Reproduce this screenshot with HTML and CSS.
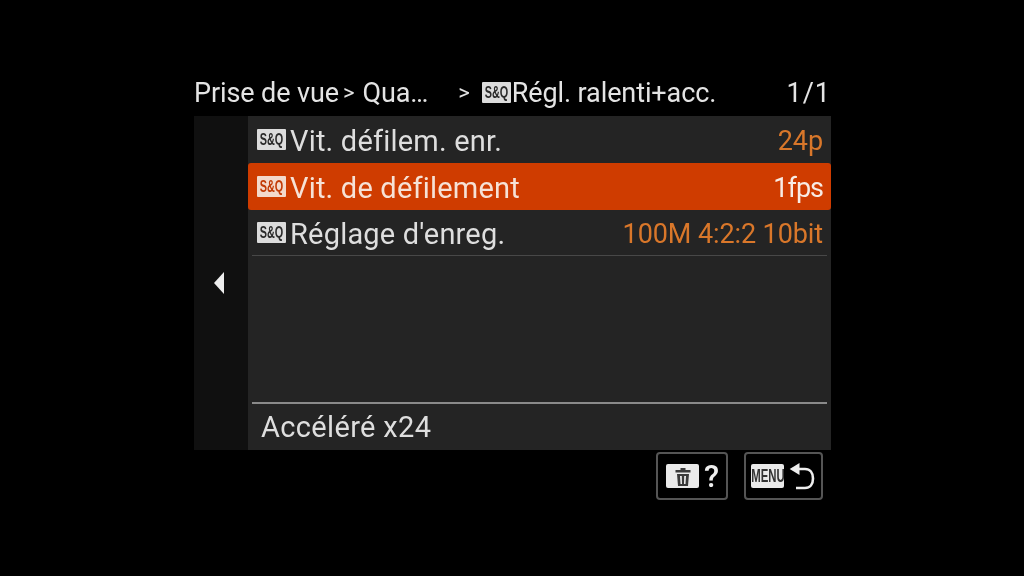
FILE: index.html
```html
<!DOCTYPE html>
<html lang="fr">
<head>
<meta charset="utf-8">
<title>Régl. ralenti+acc.</title>
<link rel="stylesheet" href="styles.css">
</head>
<body>
<main class="screen">
  <header class="crumbs">
    <span class="crumb-a">Prise de vue</span>
    <span class="chev chev-a">&gt;</span>
    <span class="crumb-b">Qua…</span>
    <span class="chev chev-b">&gt;</span>
    <span class="badge badge-head"><span class="narrow">S&amp;Q</span></span>
    <span class="crumb-c">Régl. ralenti+acc.</span>
    <span class="page">1/1</span>
  </header>
  <section class="panel">
    <aside class="side">
      <svg class="arrow" width="10" height="22" viewBox="0 0 10 22"><path d="M10 0V22L0 11Z" fill="#eeeeee"/></svg>
    </aside>
    <div class="content">
      <ul class="rows">
        <li class="row">
          <span class="badge"><span class="narrow">S&amp;Q</span></span>
          <span class="label">Vit. défilem. enr.</span>
          <span class="value">24p</span>
        </li>
        <li class="row row-active">
          <span class="badge"><span class="narrow">S&amp;Q</span></span>
          <span class="label">Vit. de défilement</span>
          <span class="value">1fps</span>
        </li>
        <li class="row row-last">
          <span class="badge"><span class="narrow">S&amp;Q</span></span>
          <span class="label">Réglage d'enreg.</span>
          <span class="value">100M 4:2:2 10bit</span>
        </li>
      </ul>
      <footer class="desc">Accéléré x24</footer>
    </div>
  </section>
  <nav class="keys">
    <div class="key key-del">
      <span class="key-icon">
        <svg width="16" height="19" viewBox="0 0 16 19"><path d="M5.500 1H10.500V3H15.500V5.500H0.500V3H5.500ZM2 7H14L13 19H3ZM5 9L5.500 17H7L6.800 9ZM9.200 9L9 17H10.500L11 9Z" fill="#3a3a3a" fill-rule="evenodd"/></svg>
      </span>
      <span class="q">?</span>
    </div>
    <div class="key key-menu">
      <span class="key-icon"><span class="menu-text">MENU</span></span>
      <svg width="27" height="30" viewBox="0 0 27 30"><path d="M9 8H16C21 8 24 11.500 24 17.500C24 23.500 21 27 16 27H7" fill="none" stroke="#eeeeee" stroke-width="2.600"/><path d="M0.700 8L10.500 2V14Z" fill="#eeeeee"/></svg>
    </div>
  </nav>
</main>
</body>
</html>
```
FILE: styles.css
```css
* { box-sizing: border-box; }
html, body { margin: 0; padding: 0; height: 100%; background: #000; }
body { font-family: Roboto, "Liberation Sans", sans-serif; color: #dedede; overflow: hidden; }
.screen { width: 637px; margin: 0 0 0 194px; padding-top: 71px; filter: blur(0.4px); }
.crumbs { display: flex; align-items: center; height: 45px; padding-bottom: 2px; font-size: 27px; letter-spacing: -0.100px; color: #e4e4e4; white-space: nowrap; }
.chev { font-size: 22px; }
.chev-a { margin-left: 4px; }
.crumb-b { margin-left: 8px; }
.chev-b { margin-left: 30px; }
.badge-head { width: 26px; margin-left: 12px; margin-right: 1px; }
.page { margin-left: auto; letter-spacing: 1px; }
.panel { display: flex; height: 334px; background: #242424; }
.side { width: 54px; background: #101010; display: flex; align-items: center; justify-content: center; }
.arrow { margin-right: 4px; }
.content { flex: 1; display: flex; flex-direction: column; }
.rows { list-style: none; margin: 0; padding: 0; flex: 1; }
.row { display: flex; align-items: center; height: 47px; padding: 0 8px 0 9px; font-size: 29px; letter-spacing: 0.200px; }
.row-active { background: #cf3c00; border-radius: 3px; color: #f6e2d6; }
.row-last { height: 46px; margin: 0 4px; padding: 0 4px 0 5px; border-bottom: 1px solid #484848; }
.label { margin-left: 4px; padding-top: 2px; }
.value { margin-left: auto; padding-top: 3px; color: #d9772a; font-size: 27px; letter-spacing: -0.100px; }
.row-active .value { color: #f8ece4; letter-spacing: -1px; }
.badge { display: inline-flex; align-items: center; justify-content: center; width: 29px; height: 21px; background: #dcdcdc; color: #2a2a2a; border-radius: 1px; flex: none; overflow: hidden; }
.narrow { font-family: "Liberation Sans", sans-serif; font-size: 17px; letter-spacing: 0; font-weight: 700; transform: scaleX(0.64); white-space: nowrap; }
.row-active .badge { background: #f3d9cb; color: #c23a05; }
.desc { margin: 0 4px; padding-left: 9px; height: 48px; border-top: 2px solid #8a8a8a; font-size: 29px; letter-spacing: 0.350px; line-height: 46px; }
.keys { display: flex; justify-content: flex-end; gap: 16px; margin-top: 2px; padding-right: 8px; }
.key { display: flex; align-items: center; height: 48px; border: 2px solid #555; border-radius: 4px; }
.key-del { width: 72px; padding-left: 8px; gap: 5px; }
.key-menu { width: 79px; padding-left: 5px; gap: 5px; }
.key-icon { display: flex; align-items: center; justify-content: center; width: 33px; height: 24px; background: #eaeaea; border-radius: 2px; overflow: hidden; flex: none; }
.menu-text { color: #333; font-family: "Liberation Sans", sans-serif; font-size: 19px; font-weight: 700; transform: scaleX(0.6); }
.q { font-family: Roboto, sans-serif; font-size: 31px; font-weight: 500; color: #eee; }
```
